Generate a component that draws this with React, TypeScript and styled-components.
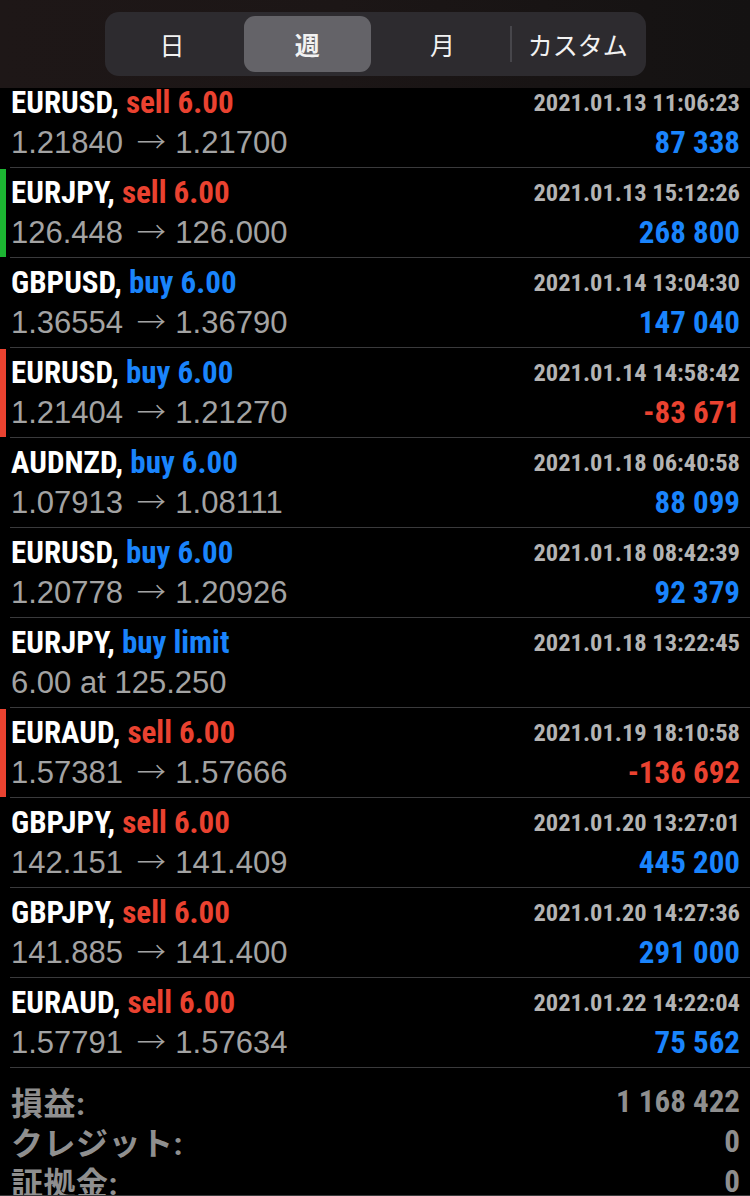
import React from "react";
import styled, { createGlobalStyle } from "styled-components";

const GlobalStyle = createGlobalStyle`
  html, body { margin: 0; padding: 0; background: #000; }
  body { width: 750px; height: 1196px; overflow: hidden; }
  * { box-sizing: border-box; }
`;

const NARROW = `"Liberation Sans Narrow", "Roboto Condensed", "Arial Narrow", "Liberation Sans", "Noto Sans CJK JP", sans-serif`;
const REGULAR = `"Liberation Sans", Arial, "Noto Sans CJK JP", sans-serif`;

const RED = "#ea4230";
const BLUE = "#1a84fc";
const GREEN = "#1cb532";

const Page = styled.div`
  position: relative;
  width: 750px;
  height: 1196px;
  overflow: hidden;
  background: #000;
`;

const Header = styled.header`
  position: absolute;
  top: 0;
  left: 0;
  right: 0;
  height: 88px;
  z-index: 2;
  display: flex;
  justify-content: center;
  padding-top: 12px;
  background: linear-gradient(90deg, #1e1717 0%, #1c1616 45%, #141212 100%);
`;

const Segmented = styled.div`
  display: grid;
  grid-template-columns: repeat(4, 1fr);
  width: 541px;
  height: 64px;
  border-radius: 14px;
  background: #2d2b2f;
`;

const Segment = styled.div<{ $active?: boolean; $divider?: boolean }>`
  position: relative;
  display: flex;
  align-items: center;
  justify-content: center;
  margin: 4px;
  border-radius: 11px;
  background: ${(p) => (p.$active ? "#646368" : "transparent")};
  color: #f2f2f2;
  font-family: "Noto Sans CJK JP", sans-serif;
  font-size: 25px;
  font-weight: ${(p) => (p.$active ? 700 : 400)};
  &::before {
    content: "";
    display: ${(p) => (p.$divider ? "block" : "none")};
    position: absolute;
    left: -4px;
    top: 10px;
    bottom: 10px;
    width: 2px;
    background: #47464b;
  }
`;

const List = styled.div`
  padding-top: 78px;
`;

const Row = styled.div<{ $mark?: string }>`
  position: relative;
  padding-left: 10px;
  &::before {
    content: "";
    display: ${(p) => (p.$mark ? "block" : "none")};
    position: absolute;
    left: 0;
    top: 1px;
    bottom: 1px;
    width: 6px;
    background: ${(p) => p.$mark};
  }
`;

const RowBody = styled.div`
  height: 90px;
  padding: 4px 10px 0 1px;
  border-bottom: 1px solid #3a3a3c;
  display: grid;
  grid-template-columns: 1fr auto;
  grid-template-rows: 40px 41px;
  align-items: center;
`;

const Title = styled.div`
  font-family: ${NARROW};
  font-weight: 700;
  font-size: 31px;
  color: #fff;
  white-space: nowrap;
`;

const Side = styled.span<{ $color: string }>`
  color: ${(p) => p.$color};
`;

const Prices = styled.div`
  font-family: ${REGULAR};
  font-size: 31px;
  line-height: 41px;
  height: 41px;
  color: #a3a3a3;
  white-space: nowrap;
`;

const Arrow = styled.span`
  font-family: "Noto Sans CJK JP", sans-serif;
  font-weight: 300;
  font-size: 29px;
  line-height: 1;
  margin: 0 1px 0 5px;
`;

const Stamp = styled.div`
  font-family: ${NARROW};
  font-weight: 700;
  font-size: 24.5px;
  color: #b3b3b3;
  text-align: right;
`;

const Profit = styled.div<{ $color: string }>`
  font-family: ${NARROW};
  font-weight: 700;
  font-size: 31px;
  color: ${(p) => p.$color};
  text-align: right;
`;

const Summary = styled.div`
  padding: 13px 10px 0 11px;
`;

const SumRow = styled.div`
  display: flex;
  justify-content: space-between;
  align-items: center;
  height: 40px;
  font-family: ${NARROW};
  font-weight: 700;
  font-size: 31px;
  color: #8f8f8f;
`;

const SumLabel = styled.span`
  font-size: 32px;
  letter-spacing: 0.5px;
`;

const TabBar = styled.div`
  position: absolute;
  left: 0;
  right: 0;
  top: 1195px;
  height: 60px;
  background: #000;
  border-top: 1px solid #3a3a3c;
`;

type Trade = {
  sym: string;
  side: string;
  sideColor: string;
  from?: string;
  to?: string;
  note?: string;
  time: string;
  profit?: string;
  profitColor?: string;
  mark?: string;
};

const trades: Trade[] = [
  { sym: "EURUSD", side: "sell 6.00", sideColor: RED, from: "1.21840", to: "1.21700", time: "2021.01.13 11:06:23", profit: "87 338", profitColor: BLUE },
  { sym: "EURJPY", side: "sell 6.00", sideColor: RED, from: "126.448", to: "126.000", time: "2021.01.13 15:12:26", profit: "268 800", profitColor: BLUE, mark: GREEN },
  { sym: "GBPUSD", side: "buy 6.00", sideColor: BLUE, from: "1.36554", to: "1.36790", time: "2021.01.14 13:04:30", profit: "147 040", profitColor: BLUE },
  { sym: "EURUSD", side: "buy 6.00", sideColor: BLUE, from: "1.21404", to: "1.21270", time: "2021.01.14 14:58:42", profit: "-83 671", profitColor: RED, mark: RED },
  { sym: "AUDNZD", side: "buy 6.00", sideColor: BLUE, from: "1.07913", to: "1.08111", time: "2021.01.18 06:40:58", profit: "88 099", profitColor: BLUE },
  { sym: "EURUSD", side: "buy 6.00", sideColor: BLUE, from: "1.20778", to: "1.20926", time: "2021.01.18 08:42:39", profit: "92 379", profitColor: BLUE },
  { sym: "EURJPY", side: "buy limit", sideColor: BLUE, note: "6.00 at 125.250", time: "2021.01.18 13:22:45" },
  { sym: "EURAUD", side: "sell 6.00", sideColor: RED, from: "1.57381", to: "1.57666", time: "2021.01.19 18:10:58", profit: "-136 692", profitColor: RED, mark: RED },
  { sym: "GBPJPY", side: "sell 6.00", sideColor: RED, from: "142.151", to: "141.409", time: "2021.01.20 13:27:01", profit: "445 200", profitColor: BLUE },
  { sym: "GBPJPY", side: "sell 6.00", sideColor: RED, from: "141.885", to: "141.400", time: "2021.01.20 14:27:36", profit: "291 000", profitColor: BLUE },
  { sym: "EURAUD", side: "sell 6.00", sideColor: RED, from: "1.57791", to: "1.57634", time: "2021.01.22 14:22:04", profit: "75 562", profitColor: BLUE },
];

export default function App() {
  return (
    <Page>
      <GlobalStyle />
      <Header>
        <Segmented>
          <Segment>日</Segment>
          <Segment $active>週</Segment>
          <Segment>月</Segment>
          <Segment $divider>カスタム</Segment>
        </Segmented>
      </Header>
      <List>
        {trades.map((t, i) => (
          <Row key={i} $mark={t.mark}>
            <RowBody>
              <Title>
                {t.sym}, <Side $color={t.sideColor}>{t.side}</Side>
              </Title>
              <Stamp>{t.time}</Stamp>
              <Prices>
                {t.note ? (
                  t.note
                ) : (
                  <>
                    {t.from}{" "}
                    <Arrow>→</Arrow>{" "}
                    {t.to}
                  </>
                )}
              </Prices>
              <Profit $color={t.profitColor || BLUE}>{t.profit || ""}</Profit>
            </RowBody>
          </Row>
        ))}
      </List>
      <Summary>
        <SumRow>
          <SumLabel>損益:</SumLabel>
          <span>1 168 422</span>
        </SumRow>
        <SumRow>
          <SumLabel>クレジット:</SumLabel>
          <span>0</span>
        </SumRow>
        <SumRow>
          <SumLabel>証拠金:</SumLabel>
          <span>0</span>
        </SumRow>
      </Summary>
      <TabBar />
    </Page>
  );
}
